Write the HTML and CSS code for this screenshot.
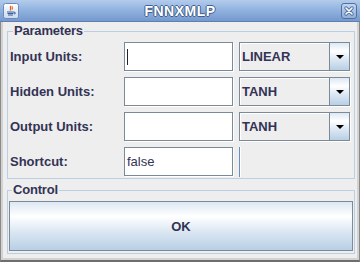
FILE: index.html
```html
<!DOCTYPE html>
<html>
<head>
<meta charset="utf-8">
<link rel="stylesheet" href="styles.css">
</head>
<body>
<div class="window">
  <div class="titlebar">
    <span class="app-icon">
      <svg width="16" height="16" viewBox="0 0 16 16">
        <defs>
          <linearGradient id="ib" x1="0" y1="0" x2="0" y2="1">
            <stop offset="0" stop-color="#ffffff"/>
            <stop offset="1" stop-color="#c9d9ee"/>
          </linearGradient>
        </defs>
        <rect x="0.5" y="0.5" width="15" height="15" rx="2" fill="url(#ib)" stroke="#6d8bb8"/>
        <path d="M8 3 C6 4.5 9 5.5 7 7.5 M9.5 3.5 C8.5 4.5 10 5 9 6.5" stroke="#e0602a" stroke-width="1.2" fill="none"/>
        <path d="M4 9 H11 M4.5 10.5 H10.5 M5 12 H10" stroke="#3a5f9a" stroke-width="1" fill="none"/>
        <path d="M11 9.2 C13 9.2 13 11 11 11" stroke="#3a5f9a" stroke-width="1" fill="none"/>
      </svg>
    </span>
    <span class="title">FNNXMLP</span>
    <span class="close-btn">
      <svg width="16" height="16" viewBox="0 0 16 16">
        <defs>
          <linearGradient id="cb" x1="0" y1="0" x2="0" y2="1">
            <stop offset="0" stop-color="#c2d6f0"/>
            <stop offset="1" stop-color="#8eadd9"/>
          </linearGradient>
        </defs>
        <rect x="0.5" y="0.5" width="15" height="15" rx="2.5" fill="url(#cb)" stroke="#4f6f9f"/>
        <path d="M5 5 L11 11 M11 5 L5 11" stroke="#4f6f9f" stroke-width="3.4" stroke-linecap="round"/>
        <path d="M5 5 L11 11 M11 5 L5 11" stroke="#ffffff" stroke-width="1.6" stroke-linecap="round"/>
      </svg>
    </span>
  </div>
  <div class="content">
    <fieldset class="group params">
      <legend>Parameters</legend>
      <div class="grid">
        <div class="label">Input Units:</div>
        <div class="field"><span class="caret"></span></div>
        <div class="combo"><span class="combo-value">LINEAR</span><span class="combo-arrow"><span class="tri"></span></span></div>

        <div class="label">Hidden Units:</div>
        <div class="field"></div>
        <div class="combo"><span class="combo-value">TANH</span><span class="combo-arrow"><span class="tri"></span></span></div>

        <div class="label">Output Units:</div>
        <div class="field"></div>
        <div class="combo"><span class="combo-value">TANH</span><span class="combo-arrow"><span class="tri"></span></span></div>

        <div class="label">Shortcut:</div>
        <div class="field field-text">false</div>
        <div class="empty"><span class="vline"></span></div>
      </div>
    </fieldset>
    <fieldset class="group control">
      <legend>Control</legend>
      <div class="ok-btn">OK</div>
    </fieldset>
  </div>
</div>
</body>
</html>
```

FILE: styles.css
```css
html, body {
  margin: 0;
  padding: 0;
  background: #eeeeee;
}

.window {
  width: 360px;
  height: 262px;
  box-sizing: border-box;
  display: flex;
  flex-direction: column;
  background: #eeeeee;
  border-left: 1px solid #8a8a8a;
  border-right: 1px solid #8a8a8a;
  border-bottom: 2px solid #6e6e6e;
  font-family: "Liberation Sans", Arial, sans-serif;
  color: #333355;
}

.titlebar {
  height: 22px;
  flex: none;
  position: relative;
  display: flex;
  align-items: center;
  justify-content: space-between;
  padding: 0 3px;
  background: linear-gradient(to bottom, #b3cbec 0%, #93b4e0 45%, #7599cf 100%);
  border-bottom: 1px solid #5f7fae;
  box-sizing: border-box;
  margin: 0 -1px;
}

.app-icon, .close-btn {
  width: 16px;
  height: 16px;
  display: block;
}

.app-icon svg, .close-btn svg { display: block; }

.title {
  position: absolute;
  left: 0;
  right: 0;
  top: 3px;
  text-align: center;
  font-weight: bold;
  font-size: 14px;
  line-height: 16px;
  color: #ffffff;
  letter-spacing: 0.5px;
  text-shadow: 1px 0 0 #41608f, -1px 0 0 #41608f, 0 1px 0 #41608f, 0 -1px 0 #41608f;
  pointer-events: none;
}

.content {
  flex: 1;
  border-left: 2px solid #d2d2d2;
  border-right: 2px solid #d2d2d2;
  border-bottom: 2px solid #d2d2d2;
  padding: 1px 2px 0 4px;
  display: flex;
  flex-direction: column;
}

.group {
  margin: 0;
  padding: 0;
  border: 1px solid #b8cfe5;
  min-width: 0;
}

.group legend {
  margin-left: 3px;
  padding: 0 1px;
  font-size: 13px;
  font-weight: bold;
  line-height: 16px;
  color: #333355;
  letter-spacing: -0.2px;
}

.params {
  padding: 3px 0 2px 2px;
}

.grid {
  display: grid;
  grid-template-columns: 108px 109px 111px;
  grid-auto-rows: 29px;
  column-gap: 6px;
  row-gap: 6px;
}

.label {
  font-size: 13px;
  font-weight: bold;
  display: flex;
  align-items: center;
  color: #333355;
}

.field {
  background: #ffffff;
  border: 1px solid #7a8a99;
  box-shadow: 1px 1px 0 #ffffff;
  box-sizing: border-box;
  height: 29px;
  width: 109px;
  position: relative;
  display: flex;
  align-items: center;
}

.caret {
  display: block;
  width: 1px;
  height: 16px;
  margin-left: 2px;
  background: #222233;
}

.field-text {
  font-size: 13px;
  padding-left: 2px;
  color: #333355;
}

.combo {
  display: flex;
  border: 1px solid #7a8a99;
  box-sizing: border-box;
  height: 29px;
  background: #eeeeee;
  box-shadow: inset 1px 1px 0 #ffffff, 1px 1px 0 #ffffff;
}

.combo-value {
  flex: 1;
  display: flex;
  align-items: center;
  padding-left: 2px;
  font-size: 13px;
  font-weight: bold;
  color: #333355;
}

.combo-arrow {
  width: 19px;
  border-left: 1px solid #7a8a99;
  display: flex;
  align-items: center;
  justify-content: center;
  background: linear-gradient(to bottom, #dde8f3 0%, #ffffff 30%, #dde8f3 60%, #b8cfe5 100%);
}

.tri {
  width: 0;
  height: 0;
  border-left: 4px solid transparent;
  border-right: 4px solid transparent;
  border-top: 4px solid #000000;
}

.empty {
  display: flex;
  height: 30px;
}

.vline {
  display: block;
  width: 1px;
  height: 30px;
  background: #6a8cc4;
  box-shadow: 1px 0 0 #ffffff;
}

.control {
  margin-top: 3px;
  padding: 3px 1px 2px 1px;
}

.ok-btn {
  height: 50px;
  box-sizing: border-box;
  border: 1px solid #7a8a99;
  background: linear-gradient(to bottom, #dde8f3 0%, #ffffff 30%, #dde8f3 60%, #b8cfe5 100%);
  display: flex;
  align-items: center;
  justify-content: center;
  font-size: 13px;
  font-weight: bold;
  color: #333355;
}
```
